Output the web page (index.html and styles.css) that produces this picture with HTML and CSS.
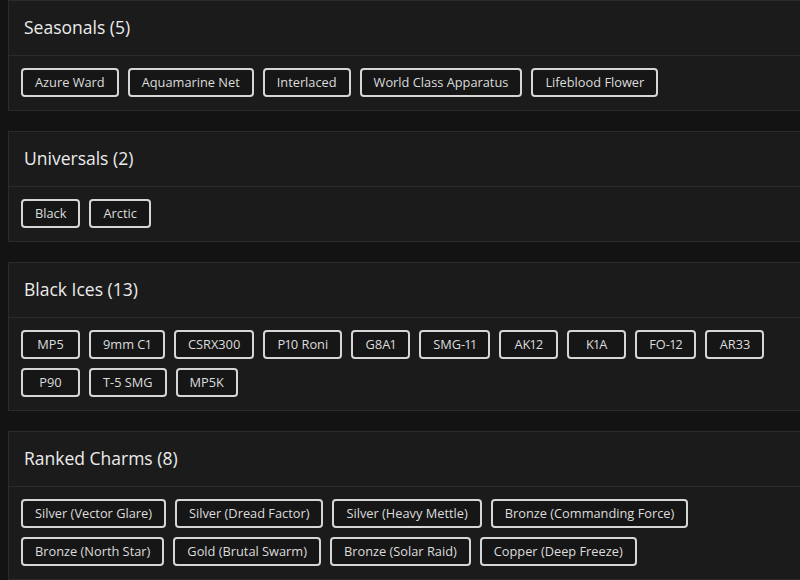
FILE: index.html
```html
<!DOCTYPE html>
<html lang="en">
<head>
<meta charset="utf-8">
<title>Collection</title>
<link rel="stylesheet" href="styles.css">
</head>
<body>
<main class="page">
  <section class="card">
    <header class="card-head"><h2 class="card-title">Seasonals (5)</h2></header>
    <div class="card-body">
      <button class="chip">Azure Ward</button>
      <button class="chip">Aquamarine Net</button>
      <button class="chip">Interlaced</button>
      <button class="chip">World Class Apparatus</button>
      <button class="chip">Lifeblood Flower</button>
    </div>
  </section>
  <section class="card">
    <header class="card-head"><h2 class="card-title">Universals (2)</h2></header>
    <div class="card-body">
      <button class="chip">Black</button>
      <button class="chip">Arctic</button>
    </div>
  </section>
  <section class="card">
    <header class="card-head"><h2 class="card-title">Black Ices (13)</h2></header>
    <div class="card-body">
      <button class="chip">MP5</button>
      <button class="chip">9mm C1</button>
      <button class="chip">CSRX300</button>
      <button class="chip">P10 Roni</button>
      <button class="chip">G8A1</button>
      <button class="chip">SMG-11</button>
      <button class="chip">AK12</button>
      <button class="chip">K1A</button>
      <button class="chip">FO-12</button>
      <button class="chip">AR33</button>
      <button class="chip">P90</button>
      <button class="chip">T-5 SMG</button>
      <button class="chip">MP5K</button>
    </div>
  </section>
  <section class="card">
    <header class="card-head"><h2 class="card-title">Ranked Charms (8)</h2></header>
    <div class="card-body">
      <button class="chip">Silver (Vector Glare)</button>
      <button class="chip">Silver (Dread Factor)</button>
      <button class="chip">Silver (Heavy Mettle)</button>
      <button class="chip">Bronze (Commanding Force)</button>
      <button class="chip">Bronze (North Star)</button>
      <button class="chip">Gold (Brutal Swarm)</button>
      <button class="chip">Bronze (Solar Raid)</button>
      <button class="chip">Copper (Deep Freeze)</button>
    </div>
  </section>
</main>
</body>
</html>
```

FILE: styles.css
```css
html, body {
  margin: 0;
  padding: 0;
  background: #131313;
  overflow: hidden;
}
body {
  font-family: "Open Sans", "DejaVu Sans", sans-serif;
  color: #e2e2e2;
}
.page {
  padding: 0 0 0 8px;
  width: 820px;
}
.card {
  background: #1b1b1b;
  border: 1px solid #2b2b2b;
  margin-bottom: 20px;
}
.card-head {
  height: 55px;
  box-sizing: border-box;
  display: flex;
  align-items: center;
  padding: 0 15px 2px 15px;
  border-bottom: 1px solid #2b2b2b;
}
.card-title {
  margin: 0;
  font-size: 17.5px;
  font-weight: 500;
  color: #ececec;
}
.card-body {
  display: flex;
  flex-wrap: wrap;
  gap: 9px 9px;
  padding: 12px 12px 13px 12px;
  width: 770px;
}
.chip {
  margin: 0;
  font-family: inherit;
  font-size: 12.8px;
  font-variant-numeric: proportional-nums;
  color: #dcdcdc;
  background: #161616;
  border: 2px solid #d6d6d6;
  border-radius: 4px;
  height: 29px;
  line-height: 25px;
  padding: 0 12px;
  min-width: 59px;
  text-align: center;
  cursor: pointer;
}
```
